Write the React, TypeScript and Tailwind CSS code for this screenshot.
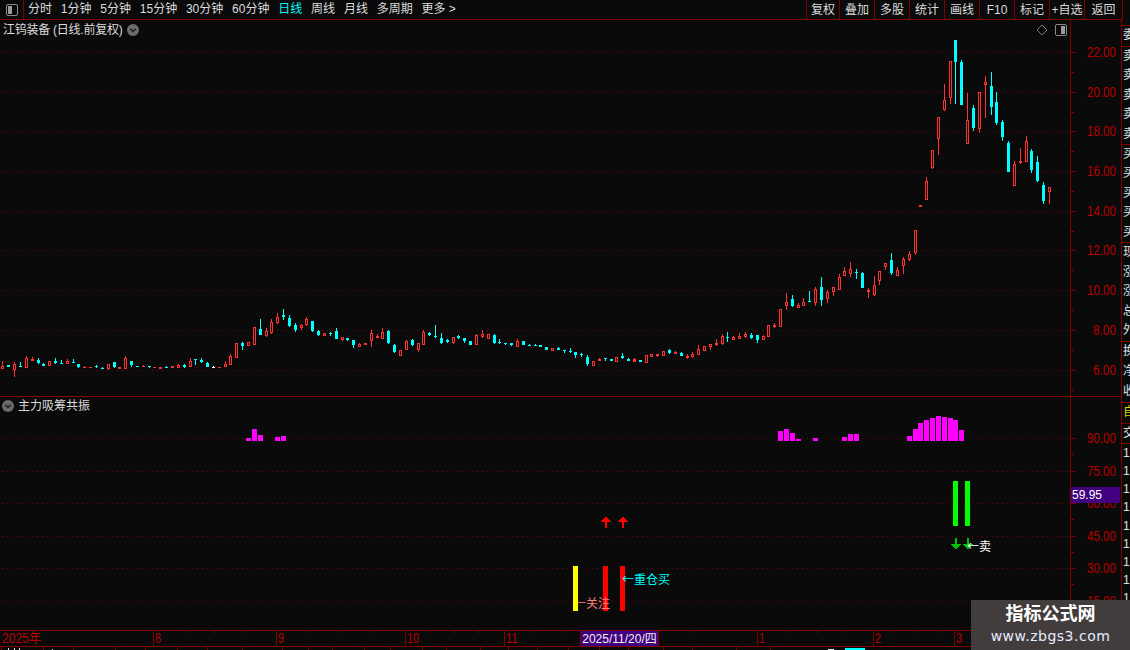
import React from "react";

type C = [number, number | null, number, number, number | null, string];
type G = { x0: number; y0: number; list: C[] };

const z4: C[] = [
[7,183,198,206,206,"r"],[25,null,195,201,null,"c"],[43,186,192,210,231,"r"],[60,186,198,201,201,"c"],[79,168,174,204,204,"r"],[97,171,176,183,183,"R"],[115,174,180,190,192,"c"],[130,189,192,197,198,"c"],[149,null,184,197,null,"r"],[167,174,182,190,192,"c"],[185,180,189,191,192,"c"],[202,177,183,191,191,"r"],[220,177,186,189,189,"c"],[236,null,192,201,204,"c"],[252,198,200,204,204,"R"],[270,null,202,204,null,"R"],[289,195,198,202,205,"c"],[306,201,203,206,206,"c"],[325,192,193,206,209,"r"],[343,null,186,201,204,"c"],[358,null,201,207,null,"R"],[376,168,174,207,207,"r"],[394,null,183,195,201,"c"],[412,null,198,201,null,"c"],[429,195,197,201,201,"R"],[448,null,198,201,204,"c"],[463,null,201,204,null,"R"],[481,null,201,207,null,"R"],[498,198,201,204,204,"c"],[517,null,198,204,null,"R"],[535,192,195,204,204,"r"],[553,192,195,201,204,"c"],[571,174,183,201,201,"r"],[586,177,177,180,195,"c"],[604,174,180,186,189,"c"],[622,186,189,201,201,"c"],[640,198,201,204,204,"w"],[657,null,201,204,null,"R"],[676,183,192,201,201,"r"],[691,162,168,195,195,"r"],[709,null,129,174,null,"r"],[727,126,129,138,150,"c"],[745,null,126,138,null,"r"],[763,null,81,135,null,"r"],[781,57,87,105,105,"c"],[799,84,93,108,111,"r"],[814,57,66,99,102,"r"],[832,39,51,69,72,"r"],[850,27,45,51,60,"c"],[868,45,54,78,81,"c"],[886,69,75,90,96,"c"],
];
const z5: C[] = [
[4,12,15,24,30,"r"],[19,-9,-3,15,18,"r"],[37,null,3,33,36,"c"],[55,30,33,45,48,"c"],[73,null,39,48,null,"r"],[90,36,39,42,48,"c"],[109,24,33,57,57,"c"],[127,null,51,60,63,"r"],[142,null,54,60,63,"c"],[160,null,60,75,84,"c"],[178,69,72,81,81,"r"],[196,null,69,75,null,"R"],[214,30,39,63,81,"r"],[232,42,48,54,54,"R"],[247,24,36,57,57,"r"],[265,30,33,69,72,"c"],[283,72,75,96,99,"c"],[301,null,90,108,null,"r"],[319,60,63,90,90,"r"],[337,57,60,75,78,"c"],[355,null,69,90,96,"r"],[370,30,36,75,75,"r"],[388,36,39,45,48,"c"],[406,15,48,51,54,"c"],[424,39,54,69,72,"c"],[442,57,60,66,69,"c"],[460,null,51,69,72,"r"],[475,45,48,54,57,"c"],[493,null,54,63,69,"c"],[511,null,63,75,null,"c"],[529,42,45,75,75,"r"],[547,30,42,51,54,"r"],[565,null,42,57,null,"r"],[583,42,45,69,72,"c"],[598,57,66,69,72,"c"],[616,null,69,72,75,"c"],[634,null,69,75,78,"c"],[652,57,63,81,81,"r"],[670,null,63,75,null,"c"],[688,72,75,78,78,"c"],[706,72,75,78,78,"c"],[721,null,75,81,null,"c"],[739,null,81,90,null,"c"],[757,null,84,93,null,"r"],[775,81,84,90,90,"c"],[793,null,90,93,99,"c"],[811,84,93,96,99,"c"],[826,null,96,105,114,"c"],[844,99,102,105,111,"c"],[862,105,111,132,138,"c"],[880,null,123,138,null,"r"],[898,114,117,123,123,"R"],[915,114,114,117,123,"c"],[933,null,117,123,null,"c"],[949,null,111,126,null,"r"],[967,99,108,114,117,"c"],[985,114,117,123,123,"c"],[1003,114,117,126,126,"R"],[1021,null,120,126,null,"c"],
];
const z6: C[] = [
[19,null,405,429,null,"r"],[34,null,402,411,null,"r"],[52,null,402,408,411,"R"],[70,null,393,408,null,"r"],[88,387,390,400,402,"c"],[106,393,396,402,402,"R"],[124,396,399,408,408,"c"],[142,402,408,414,417,"R"],[157,396,402,411,414,"r"],[175,375,387,405,405,"r"],[193,null,378,393,null,"r"],[211,null,372,381,390,"r"],[229,357,369,375,378,"R"],[247,342,348,372,375,"r"],[262,336,351,354,366,"c"],[280,348,351,360,360,"r"],[298,339,348,357,357,"r"],[316,336,342,351,354,"r"],[334,339,345,354,357,"c"],[352,null,345,360,369,"c"],[370,345,348,360,360,"r"],[385,null,315,351,null,"r"],[403,309,315,321,324,"R"],[421,null,267,321,null,"r"],[439,219,246,258,270,"r"],[457,225,237,258,261,"c"],[475,249,255,264,264,"r"],[490,234,246,258,258,"r"],[508,213,243,246,246,"c"],[526,201,207,249,258,"r"],[544,171,201,240,258,"c"],[562,210,216,237,249,"r"],[580,null,201,216,228,"r"],[598,162,171,210,210,"r"],[613,141,153,168,168,"r"],[631,126,147,162,171,"r"],[649,147,156,159,177,"c"],[667,156,159,204,204,"c"],[685,204,210,216,234,"R"],[703,168,195,225,228,"r"],[718,null,153,183,195,"r"],[736,null,129,141,150,"r"],[754,99,120,159,165,"c"],[772,141,150,168,168,"r"],[790,111,117,138,162,"r"],[808,93,102,120,123,"r"],[826,null,30,99,105,"r"],
];
const z3: C[] = [
[121,null,525,531,null,"R"],[139,441,453,510,510,"r"],[157,null,360,414,417,"r"],[175,null,261,327,375,"r"],[193,162,210,240,243,"r"],[211,null,93,204,222,"r"],[226,null,30,96,222,"c"],[244,90,96,225,225,"c"],[262,189,270,342,342,"r"],[280,225,234,294,303,"c"],[298,null,186,297,309,"r"],[316,138,156,165,264,"r"],[334,126,168,231,255,"c"],[349,186,216,279,285,"c"],[367,270,276,321,333,"c"],[385,333,339,426,426,"c"],[403,393,402,468,468,"r"],[421,354,393,399,402,"R"],[439,318,333,396,396,"r"],[454,357,363,420,429,"c"],[472,378,396,453,456,"c"],[490,456,465,513,522,"c"],[508,null,471,486,522,"r"],
];
const groups: G[] = [
  { x0: 0, y0: 300, list: z4 },
  { x0: 300, y0: 320, list: z5 },
  { x0: 640, y0: 220, list: z6 },
  { x0: 880, y0: 30, list: z3 },
];

const RED = "#ff3232";
const CYAN = "#00ffff";
const BG = "#0a0a0a";
const FRAME = "#800000";
const AXIS = "#b80000";
const colour: Record<string, string> = { r: RED, R: RED, c: CYAN, w: "#ffffff" };

function Candles() {
  const out: React.ReactNode[] = [];
  groups.forEach((g, gi) => {
    g.list.forEach((c, i) => {
      const [xz, hi, top, bot, lo, k] = c;
      const x = g.x0 + Math.floor(xz / 3);
      const Y = (v: number) => g.y0 + Math.round(v / 3);
      const t = Y(top);
      const b = Y(bot);
      const h = Y(hi ?? top);
      const l = Y(lo ?? bot);
      const col = colour[k];
      out.push(
        <g key={gi + "-" + i}>
          <rect x={x} y={h} width={1} height={Math.max(l - h, 1)} fill={col} />
          <rect x={x - 1} y={t} width={3} height={Math.max(b - t, 1)} fill={col} />
          {k === "r" && b - t >= 3 && <rect x={x} y={t + 1} width={1} height={b - t - 2} fill={BG} />}
        </g>
      );
    });
  });
  return <>{out}</>;
}

function Grid({ ys }: { ys: number[] }) {
  return (
    <>
      {ys.map((y) => (
        <line key={y} x1={2} x2={1070} y1={y + 0.5} y2={y + 0.5} stroke="#7a0000" strokeWidth={1} strokeDasharray="1 4" />
      ))}
    </>
  );
}

const FONT = "'Liberation Sans','Noto Sans CJK SC',sans-serif";

function Axis({ labels, minors, top, height }: { labels: [number, string][]; minors: number[]; top: number; height: number }) {
  return (
    <svg width={51} height={height} viewBox={`1070 ${top} 51 ${height}`} className="block shrink-0" shapeRendering="crispEdges">
      <rect x={1070} y={top} width={1} height={height} fill={FRAME} />
      {labels.map(([y, t]) => (
        <g key={t}>
          <rect x={1071} y={y} width={5} height={1} fill={FRAME} />
          <text x={1116} y={y + 5} textAnchor="end" fontSize={14} fontFamily={FONT} fill={AXIS} textLength={t.length === 5 ? 29 : 23} lengthAdjust="spacingAndGlyphs" shapeRendering="auto">
            {t}
          </text>
        </g>
      ))}
      {minors.map((y) => (
        <rect key={y} x={1071} y={y} width={3} height={1} fill={FRAME} />
      ))}
    </svg>
  );
}

function ChevronDot({ size = 12 }: { size?: number }) {
  return (
    <svg width={size} height={size} viewBox="0 0 12 12" className="inline-block shrink-0">
      <circle cx={6} cy={6} r={6} fill="#6b6b6b" />
      <path d="M3.2 4.8 L6 7.6 L8.8 4.8" fill="none" stroke="#1c1c1c" strokeWidth={1.4} />
    </svg>
  );
}

function PanelIcon({ className }: { className?: string }) {
  return (
    <svg width={12} height={12} viewBox="0 0 12 12" className={className}>
      <rect x={0.5} y={0.5} width={11} height={11} rx={1.5} fill="none" stroke="#8a8a8a" />
      <rect x={6} y={2} width={4} height={8} fill="#9a9a9a" />
    </svg>
  );
}

const periods = [
  ["分时", false], ["1分钟", false], ["5分钟", false], ["15分钟", false], ["30分钟", false], ["60分钟", false],
  ["日线", true], ["周线", false], ["月线", false], ["多周期", false], ["更多 >", false],
] as const;
const buttons: [string, string][] = [
  ["复权", "w-[33px]"], ["叠加", "w-[35px]"], ["多股", "w-[35px]"], ["统计", "w-[35px]"], ["画线", "w-[35px]"],
  ["F10", "w-[35px]"], ["标记", "w-[35px]"], ["+自选", "w-[35px]"], ["返回", "w-[38px]"],
];

const magenta: [number, number, number][] = [
  [246, 5, 438], [252, 5, 429], [258, 5, 435], [275, 5, 437], [281, 5, 436],
  [778, 5, 431], [784, 5, 429], [790, 5, 433], [796, 5, 439], [813, 5, 438], [842, 5, 437], [848, 5, 434], [854, 5, 434],
  [907, 5, 436], [913, 5, 429], [918, 5, 423], [924, 5, 420], [930, 5, 418], [936, 5, 416], [942, 5, 417], [948, 5, 418], [953, 5, 420], [959, 5, 430],
];

function Arrow({ x, y, up, fill }: { x: number; y: number; up: boolean; fill: string }) {
  const d = up
    ? `M${x - 5} ${y + 6} L${x} ${y} L${x + 5} ${y + 6} L${x + 1} ${y + 6} L${x + 1} ${y + 12} L${x - 1} ${y + 12} L${x - 1} ${y + 6} Z`
    : `M${x - 1} ${y} L${x + 1} ${y} L${x + 1} ${y + 6} L${x + 5} ${y + 6} L${x} ${y + 12} L${x - 5} ${y + 6} L${x - 1} ${y + 6} Z`;
  return <path d={d} fill={fill} />;
}

const monthMarks: [number, string][] = [[153, "8"], [276, "9"], [405, "10"], [504, "11"], [757, "1"], [873, "2"], [954, "3"]];
const smallTicks = [185, 215, 245, 308, 341, 374, 430, 455, 479, 534, 563, 689, 785, 816, 843, 893, 913, 940];
const stripTicks = [1, 43, 73, 115, 145, 177, 207, 242, 282, 308, 332, 364, 390, 422, 446, 480, 508, 537, 568, 599, 628, 663, 692, 736, 770];

const sideGroups: { cls: string; rows: string[]; h: string }[] = [
  { cls: "text-[#e0e0e0]", rows: ["委比"], h: "h-[20px]" },
  { cls: "text-[#e0e0e0]", rows: ["卖五", "卖四", "卖三", "卖二", "卖一"], h: "h-[19.4px]" },
  { cls: "text-[#e0e0e0]", rows: ["买一", "买二", "买三", "买四", "买五"], h: "h-[19.4px]" },
  { cls: "text-[#e0e0e0]", rows: ["现手", "涨跌", "涨幅", "总手", "外盘"], h: "h-[19.6px]" },
  { cls: "text-[#e0e0e0]", rows: ["换手", "净资", "收益"], h: "h-[20px]" },
  { cls: "text-[#d8d800]", rows: ["自选"], h: "h-[20px]" },
  { cls: "text-[#e0e0e0]", rows: ["交易"], h: "h-[19px]" },
];

export default function App() {
  return (
    <div className="relative flex h-[650px] w-[1130px] flex-col overflow-hidden bg-[#0a0a0a] font-['Liberation_Sans','Noto_Sans_CJK_SC',sans-serif] text-[12px] text-[#dcdcdc]">
      {/* toolbar */}
      <div className="flex h-[20px] shrink-0 items-stretch">
        <div className="flex w-[24px] items-center justify-center border-b border-r border-[#800000]">
          <PanelIcon className="rotate-180" />
        </div>
        <div className="flex flex-1 items-center gap-[8.8px] border-b border-[#800000] pl-[4px] leading-[19px]">
          {periods.map(([t, on]) => (
            <span key={t} className={on ? "text-[#00ffff]" : ""}>{t}</span>
          ))}
        </div>
        <div className="flex border-b border-r border-[#800000]">
          {buttons.map(([t, w]) => (
            <div key={t} className={`flex items-center justify-center border-l border-[#800000] ${w}`}>{t}</div>
          ))}
        </div>
        <div className="w-[7px]" />
      </div>

      <div className="flex min-h-0 flex-1">
        <div className="flex w-[1121px] shrink-0 flex-col">
          {/* upper pane */}
          <div className="relative flex h-[377px] shrink-0 border-b border-[#800000]">
            <svg width={1070} height={376} viewBox="0 20 1070 376" className="block shrink-0" shapeRendering="crispEdges">
              <Grid ys={[52, 92, 131, 171, 211, 250, 290, 330, 370]} />
              <Candles />
            </svg>
            <Axis
              top={20}
              height={376}
              labels={[[52, "22.00"], [92, "20.00"], [131, "18.00"], [171, "16.00"], [211, "14.00"], [250, "12.00"], [290, "10.00"], [330, "8.00"], [370, "6.00"]]}
              minors={[72, 112, 151, 191, 231, 270, 310, 350, 390]}
            />
            <div className="absolute left-[3px] top-[1px] flex items-center gap-[5px] leading-[18px] tracking-[-0.25px]">
              <span>江钨装备 (日线.前复权)</span>
              <ChevronDot />
            </div>
            <svg width={12} height={12} viewBox="0 0 12 12" className="absolute left-[1036px] top-[4px]">
              <path d="M6 1 L11 6 L6 11 L1 6 Z" fill="none" stroke="#777" />
            </svg>
            <PanelIcon className="absolute left-[1055px] top-[4px]" />
          </div>

          {/* lower pane */}
          <div className="relative flex h-[233px] shrink-0">
            <svg width={1070} height={233} viewBox="0 397 1070 233" className="block shrink-0" shapeRendering="crispEdges">
              <Grid ys={[438, 471, 503, 536, 568, 601]} />
              {magenta.map(([x, w, y]) => (
                <rect key={x} x={x} y={y} width={w} height={441 - y} fill="#ff00ff" />
              ))}
              <rect x={603} y={566} width={5} height={45} fill="#ff0000" />
              <rect x={620} y={566} width={5} height={45} fill="#ff0000" />
              <rect x={953} y={481} width={5} height={45} fill="#00ff00" />
              <rect x={965} y={481} width={5} height={45} fill="#00ff00" />
              <Arrow x={606} y={516} up fill="#ff0000" />
              <Arrow x={623} y={516} up fill="#ff0000" />
              <Arrow x={956} y={538} up={false} fill="#00c000" />
              <Arrow x={968} y={538} up={false} fill="#00c000" />
              <g shapeRendering="auto" fontFamily="'Noto Sans CJK SC',sans-serif" fontSize={12}>
                <text x={574} y={608} fill="#ff8080">←关注</text>
                <text x={622} y={584} fill="#00ffff">←重仓买</text>
                <text x={967} y={551} fill="#ffffff">←卖</text>
              </g>
              <rect x={573} y={566} width={5} height={45} fill="#ffff00" />
            </svg>
            <Axis
              top={397}
              height={233}
              labels={[[438, "90.00"], [471, "75.00"], [503, "60.00"], [536, "45.00"], [568, "30.00"], [601, "15.00"]]}
              minors={[454, 487, 519, 552, 584, 617]}
            />
            <div className="absolute left-[2px] top-[0px] flex items-center gap-[4px] leading-[18px]">
              <ChevronDot />
              <span>主力吸筹共振</span>
            </div>
            <div className="absolute left-[1071px] top-[90px] flex h-[16px] w-[49px] items-center bg-[#400080] pl-[1px] text-[12px] leading-none text-white">59.95</div>
          </div>

          {/* time axis */}
          <div className="relative h-[17px] shrink-0 border-y border-[#800000]">
            <svg width={1121} height={15} viewBox="0 631 1121 15" className="block" shapeRendering="crispEdges">
              {smallTicks.map((x) => (
                <rect key={x} x={x} y={631} width={1} height={2} fill={FRAME} />
              ))}
              {monthMarks.map(([x, t]) => (
                <g key={x}>
                  <rect x={x} y={631} width={1} height={15} fill={FRAME} />
                  <text x={x + 2} y={643} fontSize={14} fontFamily={FONT} fill={AXIS} textLength={t.length === 2 ? 12 : 6} lengthAdjust="spacingAndGlyphs" shapeRendering="auto">{t}</text>
                </g>
              ))}
              <text x={2} y={643} fontSize={14} fontFamily={FONT} fill={AXIS} textLength={39} lengthAdjust="spacingAndGlyphs" shapeRendering="auto">2025年</text>
            </svg>
            <div className="absolute left-[580px] top-0 flex h-[15px] w-[79px] items-center justify-center border-x border-[#800000] bg-[#400080] text-[12px] leading-none text-[#f0f0f0]">2025/11/20/四</div>
          </div>

          {/* bottom strip */}
          <div className="relative min-h-0 flex-1">
            <svg width={1121} height={3} viewBox="0 647 1121 3" className="block" shapeRendering="crispEdges">
              {stripTicks.map((x) => (
                <rect key={x} x={x} y={647} width={1} height={3} fill={FRAME} />
              ))}
              <rect x={8} y={648} width={1} height={2} fill="#e0e0e0" />
              <rect x={14} y={648} width={1} height={2} fill="#e0e0e0" />
              <rect x={19} y={648} width={1} height={2} fill="#e0e0e0" />
              <rect x={52} y={649} width={1} height={1} fill="#e0e0e0" />
              <rect x={828} y={649} width={6} height={1} fill="#e0e0e0" />
              <rect x={845} y={648} width={20} height={2} fill="#00ffff" />
            </svg>
          </div>
        </div>

        {/* right quote column */}
        <div className="min-w-0 flex-1 overflow-hidden border-l border-[#800000]">
          <div className="h-[5px]" />
          {sideGroups.map((g, i) => (
            <div key={i} className={`border-t border-[#800000] pl-[1px] ${g.cls}`}>
              {g.rows.map((r, j) => (
                <div key={j} className={`${g.h} overflow-hidden whitespace-nowrap leading-[19px]`}>{r}</div>
              ))}
            </div>
          ))}
          <div className="border-t border-[#800000] pl-[1px] text-[#e0e0e0]">
            {Array.from({ length: 9 }).map((_, i) => (
              <div key={i} className="h-[18.2px] overflow-hidden leading-[18px]">1</div>
            ))}
          </div>
        </div>
      </div>

      {/* watermark */}
      <div className="absolute bottom-0 right-0 flex h-[50px] w-[159px] flex-col items-center bg-[#423c3c]">
        <span className="mt-[2px] text-[18px] font-bold leading-[25px] text-white">指标公式网</span>
        <span className="font-['DejaVu_Sans',sans-serif] text-[14px] leading-[18px] tracking-[0.5px] text-[#e4ecff]">www.zbgs3.com</span>
      </div>
    </div>
  );
}
